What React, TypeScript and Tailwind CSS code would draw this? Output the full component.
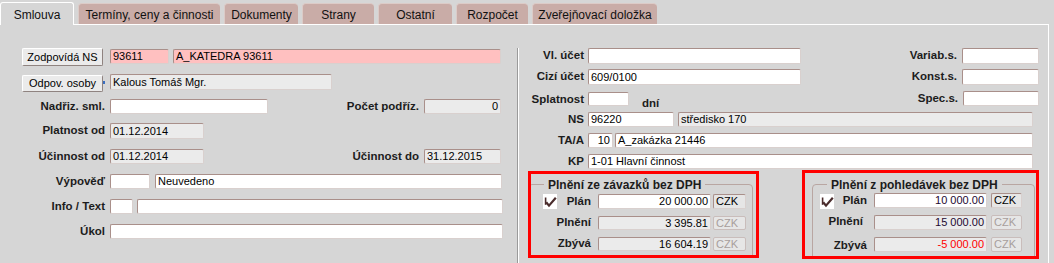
import type { ReactNode } from "react";

type InpProps = {
  className?: string;
  value?: string;
  tone?: "white" | "gray" | "pink";
  right?: boolean;
  textCls?: string;
};

function Inp({ className = "", value = "", tone = "white", right = false, textCls = "text-black" }: InpProps) {
  const bg = tone === "pink" ? "bg-[#ffc0c0]" : tone === "gray" ? "bg-[#ebebeb]" : "bg-white";
  return (
    <div
      className={`${className} ${bg} ${textCls} ${right ? "justify-end" : ""} shrink-0 flex items-center overflow-hidden whitespace-nowrap rounded-[2px] border border-t-[#a98f8a] border-l-[#a98f8a] border-b-[#d9d0ce] border-r-[#d9d0ce] px-[2px] text-[11px] leading-none`}
    >
      {value}
    </div>
  );
}

function Lbl({ className = "", children }: { className?: string; children: ReactNode }) {
  return (
    <div className={`${className} shrink-0 flex items-center justify-end whitespace-nowrap font-bold text-[11.5px] text-[#1c1c1c] leading-none`}>
      {children}
    </div>
  );
}

function Btn({ className = "", children }: { className?: string; children: ReactNode }) {
  return (
    <div className={`${className} w-[81px] shrink-0 flex items-center justify-center rounded-[2px] border border-t-white border-l-white border-b-[#8f8380] border-r-[#8f8380] bg-[#ebebeb] text-[11px] leading-none`}>
      {children}
    </div>
  );
}

function Czk({ className = "", dim = false }: { className?: string; dim?: boolean }) {
  return (
    <div
      className={`${className} ${dim ? "text-[#a89e9c] border-[#c9bdbb]" : "text-black border-t-[#a98f8a] border-l-[#a98f8a] border-b-[#d9d0ce] border-r-[#d9d0ce]"} shrink-0 flex items-center rounded-[2px] border bg-[#e6e6e6] pl-[2px] text-[11px] leading-none`}
    >
      CZK
    </div>
  );
}

function Check({ className = "" }: { className?: string }) {
  return (
    <div className={`${className} w-[14px] h-[15px] shrink-0 bg-white flex items-center justify-center`}>
      <svg width="13" height="12" viewBox="0 0 13 12">
        <path d="M1.6 1.5V8.8" stroke="#4a2c2c" strokeWidth="1.6" />
        <path d="M2.2 6.2 L5 9.6 L11.8 1.8" fill="none" stroke="#4a2c2c" strokeWidth="2.2" />
      </svg>
    </div>
  );
}

function Tab({ className = "", children }: { className?: string; children: ReactNode }) {
  return (
    <div className={`${className} h-[21px] shrink-0 flex items-center justify-center pt-[2px] rounded-t-[4px] border-t border-l border-[#dccbc7] bg-[#c9aca7] text-[12px] text-[#111]`}>
      {children}
    </div>
  );
}

export default function App() {
  return (
    <div className="w-[1054px] h-[263px] overflow-hidden bg-[#d6d6d6] text-black font-['Liberation_Sans',Arial,sans-serif]">
      {/* Tabs */}
      <div className="w-[1049px] h-[25px] flex items-end gap-[4px] border-b border-white">
        <div className="w-[74px] h-[23px] -mb-px shrink-0 flex items-center justify-center pt-[1px] rounded-t-[3px] border-t border-l border-r border-white bg-[#d6d6d6] text-[12px] text-[#111]">
          Smlouva
        </div>
        <Tab className="w-[142px]">Termíny, ceny a činnosti</Tab>
        <Tab className="w-[74px]">Dokumenty</Tab>
        <Tab className="w-[72px]">Strany</Tab>
        <Tab className="w-[74px]">Ostatní</Tab>
        <Tab className="w-[72px]">Rozpočet</Tab>
        <Tab className="w-[125px]">Zveřejňovací doložka</Tab>
      </div>

      {/* Panel */}
      <div className="w-[1049px] h-[238px] flex border-r border-white">
        {/* Left column */}
        <div className="w-[517px] shrink-0 pt-[23px] flex flex-col">
          <div className="h-[26px] flex items-start">
            <Btn className="ml-[22px] h-[18px]">Zodpovídá NS</Btn>
            <Inp className="ml-[7px] mt-[1px] w-[59px] h-[15px]" tone="pink" value="93611" />
            <Inp className="ml-[4px] mt-[1px] w-[328px] h-[15px]" tone="pink" value="A_KATEDRA 93611" />
          </div>
          <div className="h-[25px] flex items-start">
            <Btn className="ml-[22px] mt-[1px] h-[17px]">Odpov. osoby</Btn>
            <div className="mt-[7px] w-[2px] h-[3px] bg-[#3a6ec0]" />
            <Inp className="ml-[5px] w-[222px] h-[16px]" tone="gray" value="Kalous Tomáš Mgr." />
          </div>
          <div className="h-[24px] flex items-start">
            <Lbl className="w-[105px] h-[16px]">Nadřiz. sml.</Lbl>
            <Inp className="ml-[5px] w-[158px] h-[15px]" />
            <Lbl className="w-[151px] h-[16px]">Počet podříz.</Lbl>
            <Inp className="ml-[5px] w-[77px] h-[15px]" tone="gray" right value="0" />
          </div>
          <div className="h-[26px] flex items-start">
            <Lbl className="w-[105px] h-[16px]">Platnost od</Lbl>
            <Inp className="ml-[5px] w-[94px] h-[16px]" tone="gray" value="01.12.2014" />
          </div>
          <div className="h-[25px] flex items-start">
            <Lbl className="w-[105px] h-[16px]">Účinnost od</Lbl>
            <Inp className="ml-[5px] w-[94px] h-[15px]" tone="gray" value="01.12.2014" />
            <Lbl className="w-[215px] h-[16px]">Účinnost do</Lbl>
            <Inp className="ml-[5px] w-[77px] h-[15px]" tone="gray" value="31.12.2015" />
          </div>
          <div className="h-[25px] flex items-start">
            <Lbl className="w-[105px] h-[16px]">Výpověď</Lbl>
            <Inp className="ml-[5px] w-[40px] h-[15px]" />
            <Inp className="ml-[5px] w-[347px] h-[15px]" value="Neuvedeno" />
          </div>
          <div className="h-[25px] flex items-start">
            <Lbl className="w-[105px] h-[16px]">Info / Text</Lbl>
            <Inp className="ml-[5px] w-[23px] h-[15px]" />
            <Inp className="ml-[4px] w-[366px] h-[15px]" />
          </div>
          <div className="h-[16px] flex items-start">
            <Lbl className="w-[105px] h-[16px]">Úkol</Lbl>
            <Inp className="ml-[5px] w-[393px] h-[15px]" />
          </div>
        </div>

        {/* Divider */}
        <div className="mt-[23px] w-[2px] shrink-0 border-l border-[#9a9a9a] border-r border-r-white" />

        {/* Right column */}
        <div className="flex-1 pt-[23px] pr-[14px] flex flex-col">
          <div className="h-[21px] flex items-start">
            <Lbl className="w-[65px] h-[16px]">Vl. účet</Lbl>
            <Inp className="ml-[4px] w-[213px] h-[16px]" />
            <Lbl className="flex-1 h-[16px]">Variab.s.</Lbl>
            <Inp className="ml-[5px] w-[77px] h-[16px]" />
          </div>
          <div className="h-[22px] flex items-start">
            <Lbl className="w-[65px] h-[16px]">Cizí účet</Lbl>
            <Inp className="ml-[4px] w-[213px] h-[16px]" value="609/0100" />
            <Lbl className="flex-1 h-[16px]">Konst.s.</Lbl>
            <Inp className="ml-[5px] w-[77px] h-[16px]" />
          </div>
          <div className="h-[21px] flex items-start">
            <Lbl className="w-[65px] h-[15px] mt-[1px]">Splatnost</Lbl>
            <Inp className="ml-[4px] mt-[1px] w-[41px] h-[14px]" />
            <Lbl className="ml-[13px] mt-[5px] h-[15px]">dní</Lbl>
            <Lbl className="flex-1 h-[15px]">Spec.s.</Lbl>
            <Inp className="ml-[5px] w-[76px] h-[15px]" />
          </div>
          <div className="h-[21px] flex items-start">
            <Lbl className="w-[65px] h-[16px]">NS</Lbl>
            <Inp className="ml-[4px] w-[86px] h-[15px]" value="96220" />
            <Inp className="ml-[4px] w-[355px] h-[15px]" tone="gray" value="středisko 170" />
          </div>
          <div className="h-[21px] flex items-start">
            <Lbl className="w-[65px] h-[16px]">TA/A</Lbl>
            <Inp className="ml-[4px] w-[25px] h-[15px]" right value="10" />
            <Inp className="ml-[2px] w-[418px] h-[15px]" value="A_zakázka 21446" />
          </div>
          <div className="h-[16px] flex items-start">
            <Lbl className="w-[65px] h-[16px]">KP</Lbl>
            <Inp className="ml-[4px] w-[445px] h-[15px]" value="1-01 Hlavní činnost" />
          </div>

          {/* Plnění boxes */}
          <div className="flex items-start pl-[9px]">
            <div className="mt-[1px] w-[231px] h-[87px] shrink-0 overflow-hidden border-[3px] border-[#ff0000]">
              <div className="mt-[10px] -ml-[3px] mr-[3px] h-[100px] rounded-[4px] border border-[#b9a6a2]">
                <div className="-mt-[7px] ml-[15px] w-fit h-[13px] px-[4px] flex items-center bg-[#d6d6d6] font-bold text-[12px] text-[#1c1c1c] leading-none">
                  Plnění ze závazků bez DPH
                </div>
                <div className="mt-[3px] pl-[14px] flex flex-col">
                  <div className="h-[22px] flex items-start">
                    <Check />
                    <Lbl className="w-[34px] h-[15px]">Plán</Lbl>
                    <Inp className="ml-[7px] w-[113px] h-[15px]" right value="20 000.00" />
                    <Czk className="ml-[2px] w-[33px] h-[15px]" />
                  </div>
                  <div className="h-[21px] flex items-start">
                    <div className="w-[14px] shrink-0" />
                    <Lbl className="w-[34px] h-[14px]">Plnění</Lbl>
                    <Inp className="ml-[7px] w-[113px] h-[14px]" tone="gray" right value="3 395.81" />
                    <Czk className="ml-[2px] w-[33px] h-[14px]" dim />
                  </div>
                  <div className="h-[15px] flex items-start">
                    <div className="w-[14px] shrink-0" />
                    <Lbl className="w-[34px] h-[14px]">Zbývá</Lbl>
                    <Inp className="ml-[7px] w-[113px] h-[14px]" tone="gray" right value="16 604.19" />
                    <Czk className="ml-[2px] w-[33px] h-[14px]" dim />
                  </div>
                </div>
              </div>
            </div>

            <div className="ml-[43px] w-[237px] h-[89px] shrink-0 overflow-hidden border-[3px] border-[#ff0000]">
              <div className="mt-[11px] ml-[7px] mr-[1px] h-[100px] rounded-[4px] border border-[#b9a6a2]">
                <div className="-mt-[7px] ml-[14px] w-fit h-[13px] px-[4px] flex items-center bg-[#d6d6d6] font-bold text-[12px] text-[#1c1c1c] leading-none">
                  Plnění z pohledávek bez DPH
                </div>
                <div className="mt-[2px] pl-[7px] flex flex-col">
                  <div className="h-[22px] flex items-start">
                    <Check className="mt-[1px]" />
                    <Lbl className="w-[33px] h-[15px]">Plán</Lbl>
                    <Inp className="ml-[7px] w-[113px] h-[15px]" right value="10 000.00" textCls="text-[#1e0830]" />
                    <Czk className="ml-[4px] w-[31px] h-[15px]" />
                  </div>
                  <div className="h-[22px] flex items-start">
                    <div className="w-[14px] shrink-0" />
                    <Lbl className="w-[29px] h-[13px]">Plnění</Lbl>
                    <Inp className="ml-[11px] w-[113px] h-[15px]" tone="gray" right value="15 000.00" textCls="text-[#1e0830]" />
                    <Czk className="ml-[4px] w-[31px] h-[15px]" dim />
                  </div>
                  <div className="h-[15px] flex items-start">
                    <div className="w-[14px] shrink-0" />
                    <Lbl className="w-[33px] h-[17px]">Zbývá</Lbl>
                    <Inp className="ml-[7px] w-[113px] h-[15px]" tone="gray" right value="-5 000.00" textCls="text-[#ff0000]" />
                    <Czk className="ml-[4px] w-[31px] h-[15px]" dim />
                  </div>
                </div>
              </div>
            </div>
          </div>
        </div>
      </div>
    </div>
  );
}
